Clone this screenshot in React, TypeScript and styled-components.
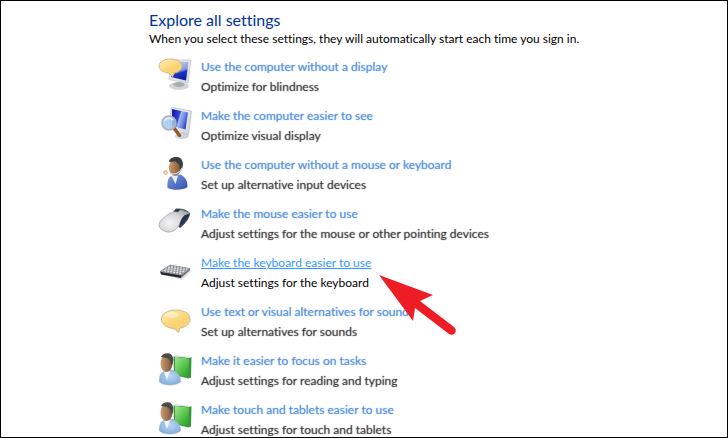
import React from "react";
import styled, { createGlobalStyle, css } from "styled-components";

const Global = createGlobalStyle`
  * { box-sizing: border-box; }
  body {
    margin: 0;
    background: #fff;
    font-family: Lato, "Open Sans", sans-serif;
    font-size: 12px;
    font-variant-ligatures: none;
  }
`;

const Page = styled.main`
  height: 100vh;
  overflow: hidden;
  border: 1px solid #000;
  padding: 8px 20px 0 148px;
  background: #fff;
`;

const Title = styled.h1`
  margin: 0;
  font-size: 16px;
  font-weight: 400;
  line-height: 22px;
  color: #003399;
`;

const Intro = styled.p`
  margin: 0 0 10px;
  line-height: 16px;
  color: #000;
`;

const List = styled.ul`
  margin: 0;
  padding: 0 0 0 9px;
  list-style: none;
  display: flex;
  flex-direction: column;
  gap: 9px;
`;

const Item = styled.li`
  position: relative;
  display: flex;
  gap: 7px;
`;

const Icon = styled.svg`
  flex: none;
  width: 36px;
  height: 40px;
`;

const Copy = styled.div`
  line-height: 20px;
  white-space: nowrap;
`;

const SettingLink = styled.a<{ $active: boolean }>`
  display: table;
  text-decoration: none;
  ${({ $active }) =>
    $active
      ? css`
          color: #3399ff;
          text-decoration: underline;
        `
      : css`
          color: rgba(34, 112, 214, 0.5);
          text-shadow: 0 0 1px rgba(34, 112, 214, 0.7);
        `}
`;

const Detail = styled.p<{ $active: boolean }>`
  margin: 0;
  ${({ $active }) =>
    $active
      ? css`
          color: #000;
        `
      : css`
          color: rgba(10, 10, 10, 0.5);
          text-shadow: 0 0 1px rgba(10, 10, 10, 0.7);
        `}
`;

const Pointer = styled.svg`
  position: absolute;
  z-index: 1;
  left: 220px;
  top: 20px;
  width: 80px;
  height: 64px;
`;

const Defs = styled.svg`
  position: absolute;
  width: 0;
  height: 0;
`;

function Gradients() {
  return (
    <Defs aria-hidden="true">
      <defs>
        <linearGradient id="screen" x1="0" y1="0.2" x2="1" y2="0.6">
          <stop offset="0" stopColor="#1018b0" />
          <stop offset="0.42" stopColor="#3048d8" />
          <stop offset="0.5" stopColor="#a9b8f2" />
          <stop offset="0.75" stopColor="#6a83e4" />
          <stop offset="1" stopColor="#2038bd" />
        </linearGradient>
        <linearGradient id="screenDown" x1="0.3" y1="0" x2="0.6" y2="1">
          <stop offset="0" stopColor="#c3cdf3" />
          <stop offset="0.5" stopColor="#8499e4" />
          <stop offset="0.62" stopColor="#1c34c4" />
          <stop offset="1" stopColor="#0d1a9c" />
        </linearGradient>
        <linearGradient id="shell" x1="0" y1="0" x2="1" y2="1">
          <stop offset="0" stopColor="#f7f8f8" />
          <stop offset="1" stopColor="#d2d5d9" />
        </linearGradient>
        <linearGradient id="gold" x1="0" y1="0" x2="0.6" y2="1">
          <stop offset="0" stopColor="#fff0bd" />
          <stop offset="0.6" stopColor="#fbd472" />
          <stop offset="1" stopColor="#f6d07c" />
        </linearGradient>
        <linearGradient id="skin" x1="0" y1="0" x2="1" y2="0">
          <stop offset="0" stopColor="#cf9c70" />
          <stop offset="1" stopColor="#7a543a" />
        </linearGradient>
        <linearGradient id="navy" x1="0" y1="0" x2="1" y2="1">
          <stop offset="0" stopColor="#7d9ce2" />
          <stop offset="1" stopColor="#304ea8" />
        </linearGradient>
        <radialGradient id="sky" cx="0.5" cy="0.4" r="0.6">
          <stop offset="0" stopColor="#bcd8f3" />
          <stop offset="1" stopColor="#86afdc" />
        </radialGradient>
        <linearGradient id="book" x1="0" y1="0" x2="0.8" y2="1">
          <stop offset="0" stopColor="#a4e898" />
          <stop offset="0.5" stopColor="#62c855" />
          <stop offset="1" stopColor="#2ba325" />
        </linearGradient>
        <radialGradient id="mouse" cx="0.35" cy="0.6" r="0.75">
          <stop offset="0" stopColor="#f6f6f6" />
          <stop offset="0.6" stopColor="#d2d3d5" />
          <stop offset="1" stopColor="#a2a4a8" />
        </radialGradient>
        <filter id="soft" x="-10%" y="-10%" width="120%" height="120%" colorInterpolationFilters="sRGB">
          <feGaussianBlur stdDeviation="0.6" />
        </filter>
        <pattern id="keys" width="3" height="2" patternUnits="userSpaceOnUse" patternTransform="rotate(9)">
          <rect width="3" height="2" fill="#85898f" />
          <rect width="2" height="1.3" fill="#f4f5f6" />
        </pattern>
      </defs>
    </Defs>
  );
}

function DisplayBubble() {
  return (
    <g filter="url(#soft)">
      <ellipse cx="21" cy="29" rx="10" ry="4" fill="#d3d6d9" />
      <ellipse cx="21" cy="27.5" rx="5.500" ry="2.500" fill="#a9adb2" />
      <path d="M12 3 L33 3 L30 26 L11 22.500 Z" fill="url(#shell)" stroke="#c3c7cc" strokeWidth="0.8" />
      <path d="M13 4.500 L30.500 5 L28 23.500 L13 20 Z" fill="url(#screenDown)" />
      <path d="M12.5 2 C19 2 24 5 24 9 C24 12.500 21 15 16.500 15.800 L14.500 20 L11 16 C5.500 15.500 1 13 1 9 C1 5 6 2 12.500 2 Z" fill="url(#gold)" stroke="#c9ae78" strokeWidth="0.8" />
    </g>
  );
}

function DisplayLens() {
  return (
    <g filter="url(#soft)">
      <ellipse cx="24" cy="30" rx="7" ry="3" fill="#cfd2d5" />
      <path d="M13 1.500 L33.500 5 L30.500 28.500 L12 23 Z" fill="url(#shell)" stroke="#b8bdc3" strokeWidth="0.8" />
      <path d="M14 3 L30 6.500 L27.500 23.500 L14 20 Z" fill="url(#screen)" />
      <path d="M16 22 L21.500 29.500" stroke="#94582f" strokeWidth="3.400" strokeLinecap="round" />
      <circle cx="11" cy="17" r="7" fill="#a4c8ec" fillOpacity="0.85" stroke="#abb1b8" strokeWidth="1.600" />
      <path d="M6.500 15 C8 11.500 13 11 15 14" fill="none" stroke="#e9f5fd" strokeWidth="1.500" />
    </g>
  );
}

function HeadsetPerson() {
  return (
    <g filter="url(#soft)">
      <path d="M9.500 33 C9 26 10 22 15 20.500 L22 19.500 C28 22 29.500 26 29.500 32 C25 35.500 15 35.500 9.500 33 Z" fill="url(#navy)" />
      <path d="M13.500 21 L17.500 29 L20 20.500 Z" fill="#e8eefa" />
      <ellipse cx="17" cy="12.500" rx="6.200" ry="8.200" fill="url(#skin)" />
      <path d="M11 7 C11 3 16 1.500 19.500 2 C25 3 26 9 24 14 L22 15 C22.500 12 21 8 17 6.500 Z" fill="#3b3e42" />
      <path d="M24 13 C22.500 18 17 20 11.500 18" fill="none" stroke="#c8ced4" strokeWidth="1.200" />
      <circle cx="7.500" cy="17.500" r="1.600" fill="none" stroke="#f2b489" strokeWidth="1.500" />
    </g>
  );
}

function Mouse() {
  return (
    <g filter="url(#soft)">
      <path d="M17 6 C22 3 30 6 32 9.500 C32 14 27 20 22 24 L16 18 Z" fill="#3a445c" />
      <path d="M1 20.500 C2 15 10 10 16 7.500 L22 5.500 L31 9 C26 11 23 15 21.500 20 C19.500 25 15 28.500 10 28 C4.500 27 1 24.500 1 20.500 Z" fill="url(#mouse)" stroke="#a0a3a7" strokeWidth="0.8" />
      <path d="M15.500 7.500 L18 4.500 L23 5 L20 8 Z" fill="#333c54" />
      <path d="M27 11 L31.500 10.500 L25 19 L22 21 C22.500 17 24 13.500 27 11 Z" fill="#27314b" />
    </g>
  );
}

function Keyboard() {
  return (
    <g>
      <path d="M4 21 L24 27 L33 18 L32 16 Z" fill="#000" opacity="0.14" />
      <path d="M2 18.500 L23 22 L23 25 L3 21.500 Z" fill="#24272c" />
      <path d="M23 22 L32 15.500 L32 17 L23 25 Z" fill="#6c7077" />
      <path d="M2 18.500 L12 12 L32 15.500 L23 22 Z" fill="url(#keys)" stroke="#85898e" strokeWidth="0.8" />
    </g>
  );
}

function Bubble() {
  return (
    <g filter="url(#soft)">
      <path d="M18 8 C27 8 32 12 32 17 C32 22 28 25 22 26 L20.500 30.500 L16 26.500 C8 26 3.500 22 3.500 17 C3.500 12 9 8 18 8 Z" fill="url(#gold)" stroke="#c9b994" strokeWidth="1" />
      <ellipse cx="14" cy="13" rx="7" ry="3" fill="#fff" opacity="0.4" />
    </g>
  );
}

function Reader() {
  return (
    <g filter="url(#soft)">
      <path d="M15.500 5.500 L31 6.500 L33.500 6 L33 26.500 L30.500 27.500 L16 24 Z" fill="#3d9440" />
      <path d="M16 5 L19 4 L33.500 6 L31.500 7 Z" fill="#dfe8dc" />
      <path d="M17 6 L31 7.500 L30.500 26.500 L17 23.500 Z" fill="url(#book)" />
      <path d="M1.500 31 C1 25 3 21 7 20 L14 19 C20 21 22.500 25 22.500 31 C17 35 6 35 1.500 31 Z" fill="url(#sky)" stroke="#8fabca" strokeWidth="0.6" />
      <path d="M6 21 L9 29 L12 20 Z" fill="#f2f6fb" />
      <ellipse cx="8.500" cy="12.500" rx="6" ry="8.500" fill="url(#skin)" />
      <path d="M3 6 C4 3 8 1.500 11.500 2.500 C15.500 4 16 9 14.500 13.500 L13 14 C13 10.500 11.500 8 9 7 Z" fill="#4a4b4c" />
    </g>
  );
}

interface Setting {
  label: string;
  detail: string;
  Art: () => React.ReactElement;
  active?: boolean;
}

const settings: Setting[] = [
  { label: "Use the computer without a display", detail: "Optimize for blindness", Art: DisplayBubble },
  { label: "Make the computer easier to see", detail: "Optimize visual display", Art: DisplayLens },
  { label: "Use the computer without a mouse or keyboard", detail: "Set up alternative input devices", Art: HeadsetPerson },
  { label: "Make the mouse easier to use", detail: "Adjust settings for the mouse or other pointing devices", Art: Mouse },
  { label: "Make the keyboard easier to use", detail: "Adjust settings for the keyboard", Art: Keyboard, active: true },
  { label: "Use text or visual alternatives for sounds", detail: "Set up alternatives for sounds", Art: Bubble },
  { label: "Make it easier to focus on tasks", detail: "Adjust settings for reading and typing", Art: Reader },
  { label: "Make touch and tablets easier to use", detail: "Adjust settings for touch and tablets", Art: Reader },
];

export default function App() {
  return (
    <>
      <Global />
      <Gradients />
      <Page>
        <Title>Explore all settings</Title>
        <Intro>When you select these settings, they will automatically start each time you sign in.</Intro>
        <List>
          {settings.map(({ label, detail, Art, active = false }) => (
            <Item key={label}>
              <Icon viewBox="0 0 36 40" aria-hidden="true">
                <Art />
              </Icon>
              <Copy>
                <SettingLink href="#" $active={active}>
                  {label}
                </SettingLink>
                <Detail $active={active}>{detail}</Detail>
              </Copy>
              {active && (
                <Pointer viewBox="0 0 80 64" aria-hidden="true">
                  <path d="M1 2 L55 22 L42 28 L76 54 A4 4 0 0 1 71 61 L37 35 L35 48 Z" fill="#ee1c24" />
                </Pointer>
              )}
            </Item>
          ))}
        </List>
      </Page>
    </>
  );
}
